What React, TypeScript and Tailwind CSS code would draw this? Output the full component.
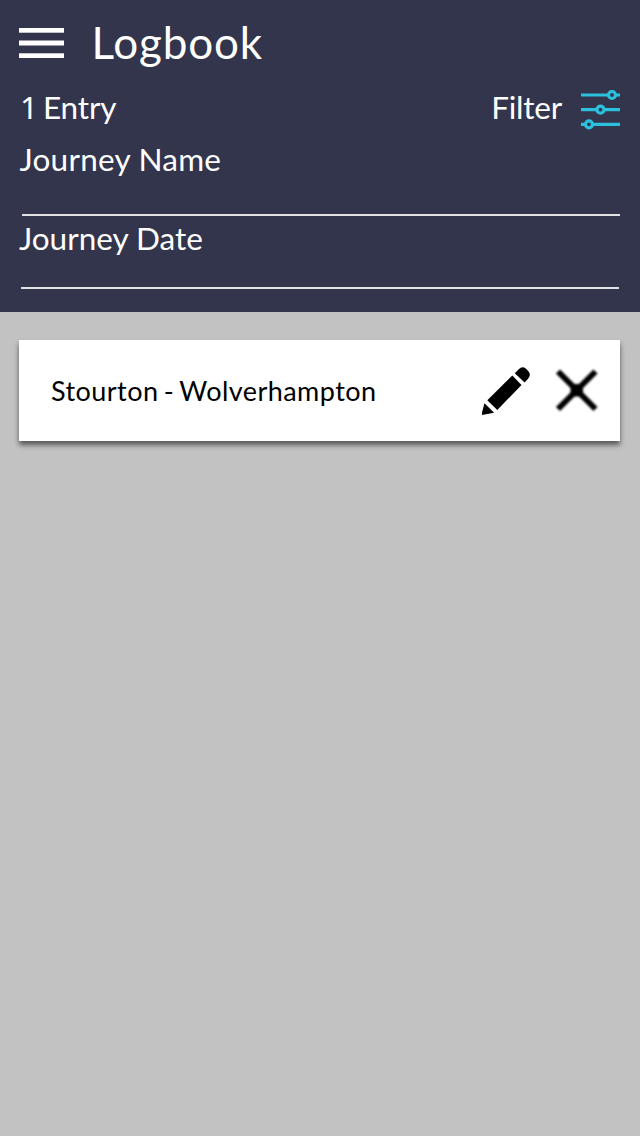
function MenuIcon() {
  return (
    <svg width="45" height="32" viewBox="0 0 45 32" fill="#fff">
      <rect y="1" width="45" height="4.7" />
      <rect y="13.5" width="45" height="5" />
      <rect y="26.3" width="45" height="4.7" />
    </svg>
  );
}

function FilterIcon() {
  return (
    <svg width="39" height="40" viewBox="0 0 39 40" fill="none" stroke="#2bc0dc" strokeWidth="3.2">
      <path d="M0 5H27.5M34.5 5H39M0 19.7H16M23 19.7H39M0 34.3H4.5M11.5 34.3H39" />
      <circle cx="31" cy="5" r="3.5" />
      <circle cx="19.5" cy="19.7" r="3.5" />
      <circle cx="8" cy="34.3" r="3.5" />
    </svg>
  );
}

function PencilIcon() {
  return (
    <svg width="48" height="48" viewBox="0 0 48 48" fill="#000">
      <path d="M32.8 6.2 37 2Q40.2 -1.2 43.8 1.6L46.4 4.2Q49.4 8 46.3 11.4L42.6 15.6Z" />
      <path d="M30.3 8.5 39.5 17.9 15.3 43 5.3 33.2Z" />
      <path d="M2.5 36.3 12.1 45.7 0 48V45.5Z" />
    </svg>
  );
}

function CloseIcon() {
  return (
    <svg width="44" height="44" viewBox="0 0 44 44" className="blur-[0.8px]">
      <path d="M3 3.5 40.5 41M40.5 3.5 3 41" stroke="#000" strokeWidth="5.9" fill="none" />
      <path d="M18.5 16H25L28 19V25L25 28.5H18.5L15.5 25V19Z" fill="#000" />
    </svg>
  );
}

export default function App() {
  return (
    <div className="min-h-[1136px] w-full bg-[#c2c2c2] font-['Lato',sans-serif] text-white">
      <header className="h-[312px] bg-[#33354c] pl-[19px] pr-5">
        <div className="flex h-[83px] items-center">
          <div className="mt-[3px]">
            <MenuIcon />
          </div>
          <h1 className="ml-[27.5px] text-[44px] leading-none tracking-[0.85px]">Logbook</h1>
        </div>
        <div className="flex h-12 items-center justify-between text-[31.5px] leading-[48px]">
          <span className="pl-[1px] tracking-[-0.1px] [word-spacing:-3px]">
            <span className="font-['Noto_Sans',sans-serif]">1</span> Entry
          </span>
          <div className="flex items-center gap-[19px]">
            <span className="tracking-[-0.2px]">Filter</span>
            <div className="mt-[5px]">
              <FilterIcon />
            </div>
          </div>
        </div>
        <div className="h-[85px] text-[31.5px] leading-[56px]">
          <div className="h-[83px] pl-[0.5px] tracking-[0.25px]">Journey Name</div>
          <div className="ml-[3px] h-0.5 bg-[#e1e2e4]" />
        </div>
        <div className="h-[73px] text-[31.5px] leading-[44px]">
          <div className="h-[71px]">Journey Date</div>
          <div className="ml-0.5 mr-[1px] h-0.5 bg-[#e1e2e4]" />
        </div>
      </header>
      <main className="pl-[19px] pr-5 pt-7">
        <article className="flex h-[101px] items-center bg-white pl-8 pr-[21px] text-black shadow-[0_4px_5px_rgba(0,0,0,0.55)]">
          <span className="flex-1 text-[27px] leading-none tracking-[0.45px] [word-spacing:-2px]">
            Stourton - Wolverhampton
          </span>
          <PencilIcon />
          <div className="-mt-px ml-[25px]">
            <CloseIcon />
          </div>
        </article>
      </main>
    </div>
  );
}
